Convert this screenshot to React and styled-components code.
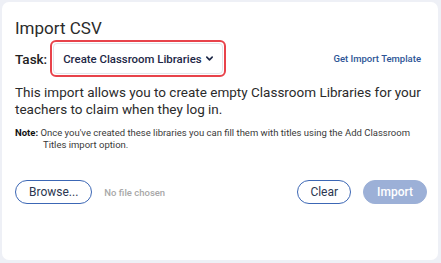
import React from 'react';
import styled, { createGlobalStyle } from 'styled-components';

const GlobalStyle = createGlobalStyle`
  html, body {
    margin: 0;
    padding: 0;
    background: #eef0f6;
    font-family: Roboto, "Noto Sans", sans-serif;
  }
`;

const Page = styled.div`
  padding: 2px 3px 3px 2px;
  height: 263px;
  box-sizing: border-box;
`;

const Card = styled.div`
  background: #ffffff;
  border-radius: 7px;
  height: 258px;
  box-sizing: border-box;
  padding: 16px 11px 0 13px;
  display: flex;
  flex-direction: column;
`;

const Title = styled.h2`
  margin: 0;
  font-size: 17px;
  font-weight: 400;
  color: #2b2b2b;
  line-height: 20px;
`;

const TaskRow = styled.div`
  display: flex;
  align-items: center;
  margin-top: 2px;
`;

const Label = styled.span`
  font-size: 13.5px;
  font-weight: 500;
  color: #222;
  margin-right: 3px;
`;

const SelectRing = styled.div`
  border: 2px solid #e8434b;
  border-radius: 6px;
  padding: 1px;
`;

const SelectBox = styled.div`
  width: 170px;
  height: 31px;
  box-sizing: border-box;
  border: 1px solid #e2e4ea;
  border-radius: 4px;
  display: flex;
  align-items: center;
  justify-content: space-between;
  padding: 0 8px 0 9px;
  font-size: 11.4px;
  font-weight: 500;
  color: #1d2746;
  white-space: nowrap;

  svg {
    flex-shrink: 0;
  }
`;

const TemplateLink = styled.a`
  margin-left: auto;
  margin-right: 6px;
  font-size: 9.5px;
  font-weight: 500;
  color: #2d5596;
  text-decoration: none;
`;

const Body = styled.p`
  margin: 7px 0 0;
  font-size: 13.5px;
  line-height: 17px;
  color: #2b2b2b;
`;

const Note = styled.p`
  margin: 9px 0 0;
  padding-left: 28px;
  text-indent: -28px;
  font-size: 9.5px;
  line-height: 12px;
  color: #3a3a3a;

  b {
    font-weight: 700;
    color: #111;
  }
`;

const Actions = styled.div`
  display: flex;
  align-items: center;
  margin-top: 29px;
`;

const PillButton = styled.button`
  height: 24px;
  padding: 0 ${p => p.$pad}px;
  border-radius: 12px;
  font-family: inherit;
  font-size: 12px;
  font-weight: ${p => (p.$filled ? 500 : 400)};
  border: 1.5px solid ${p => (p.$filled ? '#9cb0d7' : '#3c67b5')};
  background: ${p => (p.$filled ? '#9cb0d7' : '#fff')};
  color: ${p => (p.$filled ? '#ffffff' : '#2b3650')};
  margin-left: ${p => p.$ml || 0}px;
  cursor: pointer;
`;

const FileName = styled.span`
  margin-left: 12px;
  font-size: 9.5px;
  font-weight: 500;
  color: #a8a8a8;
`;

const Spacer = styled.div`
  flex: 1;
`;

const Chevron = () => (
  <svg width="9" height="9" viewBox="0 0 10 10">
    <path d="M2 3.5 L5 6.5 L8 3.5" fill="none" stroke="#1d2746" strokeWidth="1.8" strokeLinecap="round" strokeLinejoin="round" />
  </svg>
);

export default function App() {
  return (
    <>
      <GlobalStyle />
      <Page>
        <Card>
          <Title>Import CSV</Title>
          <TaskRow>
            <Label>Task:</Label>
            <SelectRing>
              <SelectBox>
                <span>Create Classroom Libraries</span>
                <Chevron />
              </SelectBox>
            </SelectRing>
            <TemplateLink href="#">Get Import Template</TemplateLink>
          </TaskRow>
          <Body>
            This import allows you to create empty Classroom Libraries for your teachers to claim when they log in.
          </Body>
          <Note>
            <b>Note:</b> Once you've created these libraries you can fill them with titles using the Add Classroom Titles import option.
          </Note>
          <Actions>
            <PillButton $pad={13}>Browse...</PillButton>
            <FileName>No file chosen</FileName>
            <Spacer />
            <PillButton $pad={12}>Clear</PillButton>
            <PillButton $pad={13} $ml={12} $filled>Import</PillButton>
          </Actions>
        </Card>
      </Page>
    </>
  );
}
